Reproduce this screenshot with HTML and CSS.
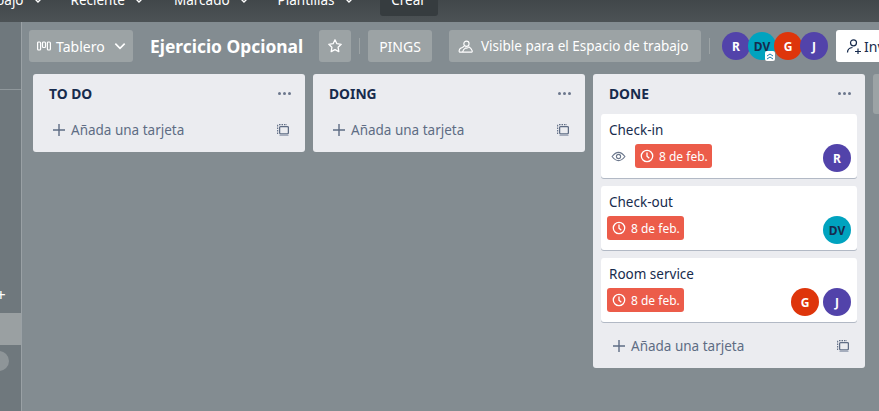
FILE: index.html
```html
<!DOCTYPE html>
<html lang="es">
<head>
<meta charset="utf-8">
<title>Ejercicio Opcional</title>
<link rel="stylesheet" href="styles.css">
</head>
<body>
<svg class="defs" width="0" height="0">
  <symbol id="chev" viewBox="0 0 12 12"><path d="M2 4l4 4 4-4" fill="none" stroke="currentColor" stroke-width="1.4"/></symbol>
  <symbol id="plus" viewBox="0 0 12 12"><path d="M6 0v12M0 6h12" fill="none" stroke="currentColor" stroke-width="1.4"/></symbol>
  <symbol id="tpl" viewBox="0 0 12 12"><path d="M.6 10V2Q.6.6 2 .6H10" fill="none" stroke="currentColor" stroke-width="1.100" stroke-dasharray="1.500 1"/><rect x="2.600" y="2.600" width="8.800" height="7.200" rx="1" fill="none" stroke="currentColor" stroke-width="1.300"/><path d="M2.500 11.300h9" stroke="#a5adbd" stroke-width="1.400"/></symbol>
  <symbol id="clock" viewBox="0 0 14 14"><circle cx="7" cy="7" r="5.700" fill="none" stroke="currentColor" stroke-width="1.300"/><path d="M7 3.500V7.300L9.300 9.300" fill="none" stroke="currentColor" stroke-width="1.300"/></symbol>
</svg>
<header class="topbar">
  <nav class="topnav">
    <span class="navitem first">bajo <svg class="navchev"><use href="#chev"/></svg></span>
    <span class="navitem second">Reciente <svg class="navchev"><use href="#chev"/></svg></span>
    <span class="navitem third">Marcado <svg class="navchev"><use href="#chev"/></svg></span>
    <span class="navitem fourth">Plantillas <svg class="navchev"><use href="#chev"/></svg></span>
    <span class="create">Crear</span>
  </nav>
</header>
<div class="main">
  <aside class="side">
    <div class="side-top"></div>
    <div class="side-plus">+</div>
    <div class="side-active"></div>
    <div class="side-dot"></div>
  </aside>
  <section class="board">
    <div class="boardbar">
      <button class="btn view">
        <svg class="viewicon" viewBox="0 0 14 10"><rect x=".6" y="1" width="3" height="8" rx="1" fill="none" stroke="currentColor" stroke-width="1.200"/><rect x="5.500" y="1" width="3" height="5.500" rx="1" fill="none" stroke="currentColor" stroke-width="1.200"/><rect x="10.400" y="1" width="3" height="8" rx="1" fill="none" stroke="currentColor" stroke-width="1.200"/></svg>
        Tablero
        <svg class="viewchev"><use href="#chev"/></svg>
      </button>
      <h1 class="title">Ejercicio Opcional</h1>
      <button class="btn star">
        <svg class="staricon" viewBox="0 0 16 16"><path d="M8 1.800l1.900 3.900 4.300.6-3.100 3 .7 4.300L8 11.600l-3.800 2 .7-4.300-3.100-3 4.300-.6z" fill="none" stroke="currentColor" stroke-width="1.300" stroke-linejoin="round"/></svg>
      </button>
      <span class="sep sep-a"></span>
      <button class="btn pings">PINGS</button>
      <button class="btn visible">
        <svg class="visicon" viewBox="0 0 16 16"><circle cx="9" cy="5" r="2.800" fill="none" stroke="currentColor" stroke-width="1.200"/><path d="M5 14H2.500Q1 14 1.200 12.500 1.500 9.800 4.600 9 5.800 8.600 6.800 7.400M5 14h9.500Q15.600 14 15 12.200 14 9.700 11.500 8.200" fill="none" stroke="currentColor" stroke-width="1.200"/><path d="M5 14q.3-3 3-4.500 2 1 3.500-1.300" fill="none" stroke="currentColor" stroke-width="1.200"/></svg>
        Visible para el Espacio de trabajo
      </button>
      <span class="sep sep-b"></span>
      <div class="members">
        <span class="avatar big purple">R</span>
        <span class="avatar big teal">DV<svg class="badge" viewBox="0 0 10 10"><rect width="10" height="10" rx="2" fill="#fff"/><path d="M2 5l3-2 3 2M2 8l3-2 3 2" fill="none" stroke="#1d7fb0" stroke-width="1"/></svg></span>
        <span class="avatar big red">G</span>
        <span class="avatar big purple">J</span>
      </div>
      <button class="invite">
        <svg class="inviteicon" viewBox="0 0 16 16"><circle cx="7.500" cy="4.800" r="3" fill="none" stroke="currentColor" stroke-width="1.200"/><path d="M1.500 14.500q0-4.500 5-5M9 13.500h6M12 10.500v6" fill="none" stroke="currentColor" stroke-width="1.200"/></svg>
        Invitar
      </button>
    </div>
    <div class="lists">
      <div class="list">
        <div class="listhead"><h2>TO DO</h2><span class="dots"><i></i><i></i><i></i></span></div>
        <div class="addrow"><svg class="plus"><use href="#plus"/></svg><span class="addtext">Añada una tarjeta</span><svg class="tpl"><use href="#tpl"/></svg></div>
      </div>
      <div class="list">
        <div class="listhead"><h2>DOING</h2><span class="dots"><i></i><i></i><i></i></span></div>
        <div class="addrow"><svg class="plus"><use href="#plus"/></svg><span class="addtext">Añada una tarjeta</span><svg class="tpl"><use href="#tpl"/></svg></div>
      </div>
      <div class="list">
        <div class="listhead"><h2>DONE</h2><span class="dots"><i></i><i></i><i></i></span></div>
        <div class="cards">
          <article class="card">
            <div class="cardtitle">Check-in</div>
            <div class="cardrow">
              <svg class="eye" viewBox="0 0 16 12"><path d="M1 6q7-9 14 0-7 9-14 0z" fill="none" stroke="currentColor" stroke-width="1.200"/><circle cx="8" cy="6" r="2.300" fill="none" stroke="currentColor" stroke-width="1.200"/></svg>
              <span class="due"><svg class="clock"><use href="#clock"/></svg>8 de feb.</span>
              <span class="cardmembers"><span class="avatar purple">R</span></span>
            </div>
          </article>
          <article class="card">
            <div class="cardtitle">Check-out</div>
            <div class="cardrow">
              <span class="due"><svg class="clock"><use href="#clock"/></svg>8 de feb.</span>
              <span class="cardmembers"><span class="avatar teal">DV</span></span>
            </div>
          </article>
          <article class="card">
            <div class="cardtitle">Room service</div>
            <div class="cardrow">
              <span class="due"><svg class="clock"><use href="#clock"/></svg>8 de feb.</span>
              <span class="cardmembers"><span class="avatar red">G</span><span class="avatar purple">J</span></span>
            </div>
          </article>
        </div>
        <div class="addrow"><svg class="plus"><use href="#plus"/></svg><span class="addtext">Añada una tarjeta</span><svg class="tpl"><use href="#tpl"/></svg></div>
      </div>
      <div class="list ghost"></div>
    </div>
  </section>
</div>
</body>
</html>
```
FILE: styles.css
```css
* { box-sizing: border-box; }
html, body { margin: 0; height: 411px; overflow: hidden; }
body { font-family: "Noto Sans", "Open Sans", sans-serif; background: #838c91; display: flex; flex-direction: column; width: 879px; }
.defs { display: block; height: 0; }
button { font: inherit; border: 0; }

.topbar { height: 22px; flex: none; background: linear-gradient(#41474a, #4c5255); }
.topnav { display: flex; align-items: center; height: 20px; margin-top: -10px; margin-left: -4px; color: #fff; font-size: 13.500px; }
.navitem { display: flex; align-items: center; gap: 8px; white-space: nowrap; flex: none; }
.first { margin-right: 27px; }
.second { margin-right: 29px; }
.third { margin-right: 28px; }
.fourth { margin-right: 25px; }
.navchev { width: 12px; height: 12px; }
.create { background: #363c3f; width: 58px; height: 32px; border-radius: 3px; display: flex; align-items: center; justify-content: center; flex: none; }

.main { display: flex; flex: 1; min-height: 0; }
.side { width: 22px; flex: none; background: #6f787d; border-right: 1px solid #9aa1a5; position: relative; overflow: hidden; }
.side-top { height: 68px; border-bottom: 1px solid #8f979b; }
.side-plus { position: absolute; top: 264px; left: -4px; color: #fff; font-size: 17px; line-height: 17px; }
.side-active { position: absolute; top: 291px; left: 0; width: 21px; height: 32px; background: #9aa0a2; }
.side-dot { position: absolute; top: 329px; left: -11px; width: 20px; height: 20px; border-radius: 50%; background: #8e9598; }

.board { flex: 1; min-width: 0; padding: 8px 0 0 7px; overflow: hidden; }
.boardbar { display: flex; align-items: center; height: 32px; white-space: nowrap; color: #fff; font-size: 14px; }
.btn { height: 32px; border-radius: 3px; background: #9ca3a5; color: #fff; display: flex; align-items: center; flex: none; padding: 0; }
.view { width: 104px; padding-left: 8px; }
.viewicon { width: 14px; height: 10px; margin-right: 5px; }
.viewchev { width: 14px; height: 14px; margin-left: 8px; }
.title { margin: 0 0 0 17px; font-size: 17.400px; font-weight: 700; color: #fff; width: 169px; flex: none; }
.star { width: 32px; justify-content: center; }
.staricon { width: 16px; height: 16px; }
.sep { width: 1px; height: 16px; background: #9ca3a5; flex: none; }
.sep-a { margin: 0 8px; }
.pings { width: 64px; justify-content: center; }
.visible { width: 252px; margin-left: 17px; padding-left: 9px; gap: 8px; font-size: 13.500px; }
.visicon { width: 15px; height: 15px; }
.sep-b { margin: 0 12px 0 8px; }
.members { display: flex; flex: none; }
.avatar { width: 28px; height: 28px; border-radius: 50%; display: inline-flex; align-items: center; justify-content: center; color: #fff; font-size: 12px; font-weight: 700; flex: none; }
.avatar.big { margin-right: -2px; position: relative; }
.purple { background: #5243aa; }
.teal { background: #00a3bf; color: #172b4d; }
.red { background: #de350b; }
.badge { position: absolute; right: 1px; bottom: -1px; width: 10px; height: 10px; }
.invite { background: #fff; color: #172b4d; width: 90px; height: 32px; border-radius: 3px; margin-left: 10px; display: flex; align-items: center; padding-left: 10px; gap: 2px; flex: none; }
.inviteicon { width: 16px; height: 16px; }

.lists { display: flex; align-items: flex-start; gap: 8px; margin-top: 12px; margin-left: 4px; }
.list { width: 272px; flex: none; background: #ebecf0; border-radius: 3px; padding-bottom: 6px; }
.ghost { height: 40px; width: 40px; background: #9ca3a5; }
.listhead { height: 38px; margin-bottom: 2px; padding: 0 14px 0 16px; display: flex; align-items: center; justify-content: space-between; }
.listhead h2 { margin: 0; font-size: 13.800px; font-weight: 700; color: #172b4d; }
.dots { display: flex; gap: 2px; }
.dots i { width: 3px; height: 3px; border-radius: 50%; background: #6b778c; display: block; }
.addrow { height: 32px; display: flex; align-items: center; color: #5e6c84; padding: 0 16px 0 20px; font-size: 13.500px; }
.plus { width: 12px; height: 12px; margin-right: 6px; }
.addtext { flex: 1; }
.tpl { width: 12px; height: 12px; }

.cards { padding: 0 8px; display: flex; flex-direction: column; gap: 8px; margin-bottom: 8px; }
.card { background: #fff; border-radius: 3px; box-shadow: 0 1px 0 rgba(9,30,66,.25); height: 64px; padding: 6px 8px 0; }
.cardtitle { font-size: 13.500px; line-height: 20px; color: #172b4d; }
.cardrow { display: flex; align-items: flex-start; margin-top: 4px; }
.eye { width: 15px; height: 11px; color: #6b778c; margin: 7px 9px 0 2px; flex: none; }
.due { background: #ec5c4a; color: #fff; border-radius: 3px; height: 24px; width: 77px; display: flex; align-items: center; font-size: 12px; padding-left: 5px; gap: 5px; flex: none; }
.card:nth-child(n+2) .due { margin-left: -2px; }
.clock { width: 14px; height: 14px; }
.cardmembers { margin-left: auto; display: flex; gap: 4px; margin-right: -2px; }
```
